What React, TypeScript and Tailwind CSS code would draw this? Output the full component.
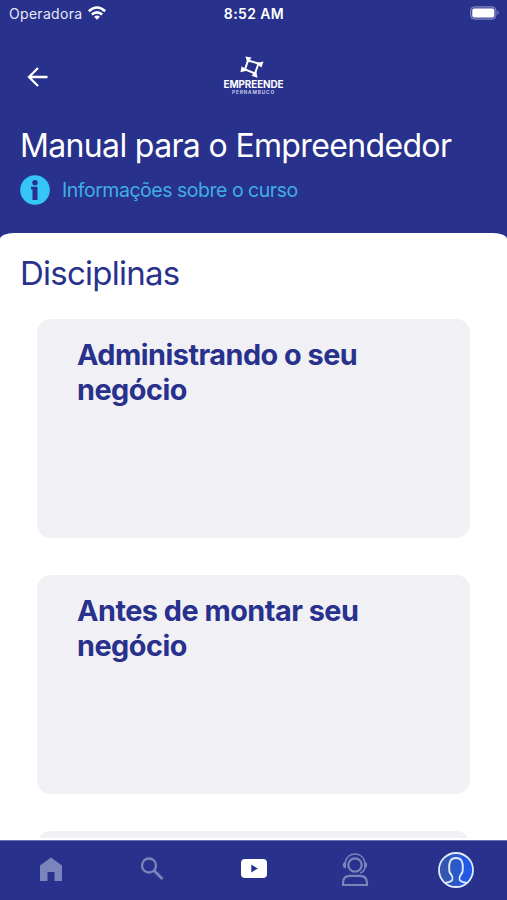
const inter = "font-['Inter','Liberation_Sans',sans-serif]";

function StatusBar() {
  return (
    <div className="grid h-7 grid-cols-3 items-center pl-[9px] pr-[7px] text-white">
      <div className="flex items-center gap-[6px]">
        <span className="text-[14px] leading-7 tracking-[0.3px] text-[#e6e8fa]">Operadora</span>
        <svg width="18" height="14" viewBox="0 0 18 14" className="-mt-[2px]" fill="none" stroke="#fff" strokeWidth="2.6">
          <path d="M.8 5.2Q9-2.2 17.2 5.2" />
          <path d="M3.8 8.5Q9 4.1 14.2 8.5" />
          <path d="M9 13.8 6.1 10.8Q9 8.4 11.9 10.8Z" fill="#fff" stroke="none" />
        </svg>
      </div>
      <span className="-ml-px -mt-px whitespace-nowrap text-center text-[14px] font-semibold leading-5 tracking-[0.4px]">8:52 AM</span>
      <svg className="-mt-[2px] justify-self-end" width="31" height="16" viewBox="0 0 31 16">
        <rect x="1.5" y="1.8" width="25.5" height="12.4" rx="4" fill="#4a50a0" stroke="#8589c7" strokeWidth="1" />
        <rect x="3.3" y="3.5" width="22" height="9" rx="2" fill="#fff" />
        <path d="M28.5 5.5Q31 7.7 28.5 10Z" fill="#8589c7" />
      </svg>
    </div>
  );
}

function Logo() {
  return (
    <div className="flex w-[62px] flex-col items-center text-white">
      <svg className="-ml-[3px]" width="24" height="22" viewBox="0 0 24 22" fill="none" stroke="#fff" strokeWidth="2">
        <path d="M8 4.5 18.5 7.5 15 17.5 5 13.5Z" />
        <path d="M5.5.5 11.5 1.5 7.5 7.5ZM23.5 5.5l-2 6-6-4.2ZM17.5 21.8l-6-2 4.6-5.2ZM.4 16.2 1.6 10.3l6.2 4.2Z" fill="#fff" stroke="none" />
      </svg>
      <span className="text-[9.9px] font-bold leading-[12px] tracking-[-0.1px]">EMPREENDE</span>
      <span className="-mt-px text-[4.8px] font-semibold leading-[6px] tracking-[0.85px] text-[#d5d8f4]">PERNAMBUCO</span>
    </div>
  );
}

function Card({ title }: { title: string }) {
  return (
    <section className="h-[219px] w-[433px] shrink-0 rounded-[14px] bg-[#f0f0f5] px-10 pt-[18px]">
      <h3 className="w-[320px] text-[28.8px] font-bold leading-[35px] tracking-[-0.5px] text-[#28318b]">{title}</h3>
    </section>
  );
}

function TabBar() {
  return (
    <nav className="grid h-[60px] shrink-0 grid-cols-5 items-center justify-items-center border-t border-[#6a70b4] bg-[#28318b]">
      <svg className="-mt-[2px]" width="24" height="26" viewBox="0 0 24 26" fill="#7c84bc">
        <path d="M1 8.5 12 .5l11 8V24h-7.5v-9h-7v9H1Z" />
      </svg>
      <svg className="-mt-[4px]" width="24" height="26" viewBox="0 0 24 26" fill="none" stroke="#7c84bc" strokeWidth="2.3">
        <circle cx="9" cy="9.5" r="7" />
        <path d="m14 14.5 8.5 8.5" strokeWidth="2.8" />
      </svg>
      <svg className="-mt-[3px] ml-px" width="26" height="20" viewBox="0 0 26 20">
        <rect width="26" height="19" rx="4" fill="#fff" />
        <path d="m10.3 5.5 6.5 4-6.5 4Z" fill="#28318b" />
      </svg>
      <svg className="-mt-px" width="28" height="34" viewBox="0 0 28 34" fill="none" stroke="#7c84bc">
        <circle cx="14" cy="12" r="6.7" strokeWidth="2.2" />
        <path d="M4 10C5.5-2 22.5-2 24 10M24 15q-1 4-5 4.8" strokeWidth="1.4" />
        <path d="M5 9Q1.8 9 1.8 12T5 15.5ZM23 9q3.2 0 3.2 3T23 15.5Z" fill="#7c84bc" stroke="none" />
        <path d="M2 32V30Q2 22.8 9 22.8h10q7 0 7 7.2v2Z" strokeWidth="2.2" />
      </svg>
      <svg className="-mt-px" width="38" height="38" viewBox="0 0 38 38" fill="none" stroke="#e2eafb" strokeWidth="1.8">
        <defs>
          <linearGradient id="avatar">
            <stop offset=".25" stopColor="#3357b0" />
            <stop offset=".8" stopColor="#205be5" />
          </linearGradient>
        </defs>
        <circle cx="19" cy="19" r="17" fill="url(#avatar)" />
        <path d="M8 32Q14 31 15.3 29q.8-2.6-.8-5-2.4-2-2.3-6-.8-11 6.8-11t6.8 11q.1 4-2.3 6-1.6 2.4-.8 5Q24 31 30 32" />
      </svg>
    </nav>
  );
}

export default function App() {
  return (
    <div className={`flex h-[900px] w-[507px] flex-col overflow-hidden bg-[#28318b] ${inter}`}>
      <header className="h-[233px] shrink-0">
        <StatusBar />
        <div className="grid h-[98px] grid-cols-3 items-center">
          <svg className="ml-[27px]" width="22" height="22" viewBox="0 0 22 22" fill="none" stroke="#fff" strokeWidth="2.3">
            <path d="M20.5 11H2.5M11 2 2 11l9 9" />
          </svg>
          <div className="justify-self-center pb-[3px]"><Logo /></div>
        </div>
        <h1 className="ml-5 whitespace-nowrap text-[32px] leading-10 tracking-[-0.65px] text-white">Manual para o Empreendedor</h1>
        <div className="ml-5 mt-[9px] flex h-[30px] items-center gap-3">
          <svg width="30" height="30" viewBox="0 0 30 30">
            <circle cx="15" cy="15" r="14.8" fill="#35c5f7" />
            <circle cx="15" cy="7.8" r="2.7" fill="#28318b" />
            <path d="M11 11.7h6.5V25h-5V14.5H11Z" fill="#28318b" />
          </svg>
          <span className="whitespace-nowrap text-[19.5px] leading-[30px] tracking-[-0.48px] text-[#40ade6]">Informações sobre o curso</span>
        </div>
      </header>
      <main className="flex h-[607px] shrink-0 flex-col overflow-hidden bg-white [border-radius:14px_14px_0_0/6px_6px_0_0]">
        <h2 className="ml-5 mt-[19px] text-[33px] leading-[42px] tracking-[-0.75px] text-[#28318b]">Disciplinas</h2>
        <div className="ml-[37px] mt-[25px] flex h-[519px] shrink-0 flex-col gap-[37px] overflow-hidden">
          <Card title="Administrando o seu negócio" />
          <Card title="Antes de montar seu negócio" />
          <Card title="" />
        </div>
      </main>
      <TabBar />
    </div>
  );
}
